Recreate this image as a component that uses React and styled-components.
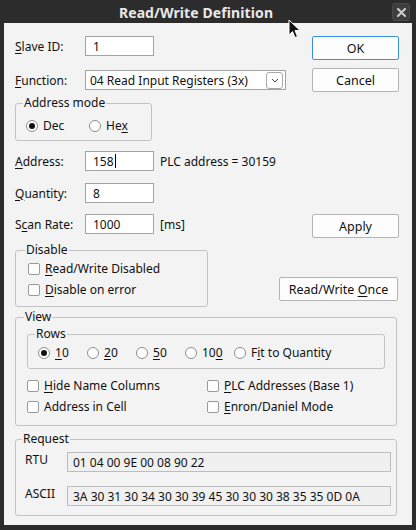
import React from 'react';
import styled, { createGlobalStyle } from 'styled-components';

const GlobalStyle = createGlobalStyle`
  html, body { margin: 0; padding: 0; background: #2c2c2c; }
  body { font-family: "Noto Sans", "DejaVu Sans", sans-serif; font-size: 12px; color: #111; }
`;

const Window = styled.div`
  position: relative;
  width: 416px;
  height: 530px;
  background: #2c2c2c;
  display: flex;
  flex-direction: column;
  box-sizing: border-box;
`;

const TitleBar = styled.div`
  height: 23px;
  display: flex;
  align-items: center;
  flex-shrink: 0;
`;

const Title = styled.div`
  flex: 1;
  text-align: center;
  color: #e8e8e8;
  font-weight: 700;
  font-size: 14px;
  letter-spacing: 0.1px;
  padding-top: 1px;
`;

const CloseButton = styled.div`
  width: 16px;
  height: 16px;
  margin-right: 6px;
  margin-top: 1px;
  border-radius: 3px;
  background: #3e3e3e;
  border: 1px solid #4a4a4a;
  display: flex;
  align-items: center;
  justify-content: center;
`;

const Body = styled.div`
  flex: 1;
  margin: 0 4px 5px 4px;
  background: #f3f3f3;
  padding: 13px 13px 0 11px;
  box-sizing: border-box;
  display: flex;
  flex-direction: column;
`;

const Row = styled.div`
  display: flex;
  align-items: ${p => p.$align || 'center'};
  justify-content: space-between;
  margin-top: ${p => p.$top || 0}px;
`;

const Field = styled.div`
  display: flex;
  align-items: center;
`;

const Label = styled.span`
  width: ${p => p.$w || 70}px;
  flex-shrink: 0;
`;

const TextBox = styled.div`
  width: ${p => p.$w || 69}px;
  height: 20px;
  box-sizing: border-box;
  border: 1px solid #a3a3a3;
  background: #fff;
  padding: 0 7px;
  display: flex;
  align-items: center;
`;

const Caret = styled.span`
  display: inline-block;
  width: 1px;
  height: 14px;
  background: #000;
  margin-left: 1px;
`;

const Note = styled.span`
  margin-left: 6px;
`;

const Combo = styled.div`
  width: 201px;
  height: 20px;
  box-sizing: border-box;
  border: 1px solid #a3a3a3;
  background: #fff;
  display: flex;
  align-items: center;
  justify-content: space-between;
  padding: 0 2px 0 4px;
`;

const DropButton = styled.div`
  width: 15px;
  height: 15px;
  border: 1px solid #a8a8a8;
  border-radius: 3px;
  display: flex;
  align-items: center;
  justify-content: center;
  background: #fff;
`;

const Button = styled.div`
  width: ${p => p.$w || 87}px;
  height: 24px;
  box-sizing: border-box;
  border: 1px solid ${p => (p.$default ? '#3b8fe0' : '#b4b4b4')};
  border-radius: 2px;
  background: #fdfdfd;
  display: flex;
  align-items: center;
  justify-content: center;
  margin-top: ${p => p.$mt || 0}px;
  margin-right: ${p => p.$mr || 0}px;
  font-size: 12.5px;
`;

const Group = styled.fieldset`
  margin: ${p => p.$top || 0}px ${p => p.$right || 0}px 0 0;
  width: ${p => (p.$w ? `${p.$w}px` : 'auto')};
  box-sizing: border-box;
  border: 1px solid #c3c3c3;
  border-radius: 3px;
  padding: ${p => p.$pad || '0 10px 6px 10px'};
  min-width: 0;
`;

const Legend = styled.legend`
  padding: 0 1px;
  margin-left: -3px;
  line-height: 14px;
`;

const RadioRow = styled.div`
  display: flex;
  align-items: center;
  margin-top: ${p => p.$top || 0}px;
`;

const Option = styled.label`
  display: flex;
  align-items: center;
  width: ${p => (p.$w ? `${p.$w}px` : 'auto')};
  flex-shrink: 0;
`;

const Radio = styled.span`
  width: 12px;
  height: 12px;
  box-sizing: border-box;
  border-radius: 50%;
  border: 1px solid #8e8e8e;
  background: #fff;
  margin-right: 5px;
  display: flex;
  align-items: center;
  justify-content: center;
  &::after {
    content: '';
    width: 6px;
    height: 6px;
    border-radius: 50%;
    background: ${p => (p.$on ? '#111' : 'transparent')};
  }
`;

const Check = styled.span`
  width: 12px;
  height: 12px;
  box-sizing: border-box;
  border-radius: 2px;
  border: 1px solid #999;
  background: #fff;
  margin-right: 5px;
`;

const CheckGrid = styled.div`
  display: grid;
  grid-template-columns: 180px 1fr;
  row-gap: 4px;
  margin-top: ${p => p.$top || 0}px;
`;

const U = styled.span`
  text-decoration: underline;
  text-underline-offset: 2px;
`;

const ReqRow = styled.div`
  display: flex;
  align-items: center;
  margin-top: ${p => p.$top || 0}px;
`;

const ReqLabel = styled.span`
  width: 42px;
  flex-shrink: 0;
  margin-top: -6px;
`;

const ReqBox = styled.div`
  flex: 1;
  height: 20px;
  box-sizing: border-box;
  border: 1px solid #bdbdbd;
  background: #f0f0f0;
  padding: 0 5px;
  display: flex;
  align-items: center;
  margin-right: -5px;
`;

const Pointer = styled.svg`
  position: absolute;
  left: 288px;
  top: 19px;
`;

const u = (before, letter, after) => (
  <span>
    {before}
    <U>{letter}</U>
    {after}
  </span>
);

export default function App() {
  return (
    <>
      <GlobalStyle />
      <Window>
        <TitleBar>
          <Title>Read/Write Definition</Title>
          <CloseButton>
            <svg width="9" height="9" viewBox="0 0 9 9">
              <path d="M1 1L8 8M8 1L1 8" stroke="#cfcfcf" strokeWidth="2" strokeLinecap="round" />
            </svg>
          </CloseButton>
        </TitleBar>
        <Body>
          <Row $align="flex-start">
            <Field>
              <Label>{u('', 'S', 'lave ID:')}</Label>
              <TextBox>1</TextBox>
            </Field>
            <Button $default>OK</Button>
          </Row>
          <Row $top={8}>
            <Field>
              <Label>{u('', 'F', 'unction:')}</Label>
              <Combo>
                <span>04 Read Input Registers (3x)</span>
                <DropButton>
                  <svg width="8" height="5" viewBox="0 0 8 5">
                    <path d="M1 1L4 4L7 1" stroke="#444" strokeWidth="1" fill="none" />
                  </svg>
                </DropButton>
              </Combo>
            </Field>
            <Button>Cancel</Button>
          </Row>

          <Group $w={137} $top={4} $pad="0 8px 6px 10px">
            <Legend>Address mode</Legend>
            <RadioRow $top={7}>
              <Option $w={63}><Radio $on />Dec</Option>
              <Option><Radio />{u('He', 'x', '')}</Option>
            </RadioRow>
          </Group>

          <Row $top={10} $align="flex-start">
            <Field>
              <Label>{u('', 'A', 'ddress:')}</Label>
              <TextBox>158<Caret /></TextBox>
              <Note>PLC address = 30159</Note>
            </Field>
          </Row>
          <Row $top={12}>
            <Field>
              <Label>{u('', 'Q', 'uantity:')}</Label>
              <TextBox>8</TextBox>
            </Field>
          </Row>
          <Row $top={11} $align="flex-start">
            <Field>
              <Label>{u('S', 'c', 'an Rate:')}</Label>
              <TextBox>1000</TextBox>
              <Note>[ms]</Note>
            </Field>
            <Button>Apply</Button>
          </Row>

          <Row $top={5} $align="flex-start">
            <Group $w={193} $pad="0 10px 8px 12px">
              <Legend>Disable</Legend>
              <RadioRow $top={3}>
                <Option><Check />{u('', 'R', 'ead/Write Disabled')}</Option>
              </RadioRow>
              <RadioRow $top={4}>
                <Option><Check />{u('', 'D', 'isable on error')}</Option>
              </RadioRow>
            </Group>
            <Button $w={119} $mt={34} $mr={1}>{u('Read/Write ', 'O', 'nce')}</Button>
          </Row>

          <Group $top={3} $right={2} $pad="0 11px 10px 11px">
            <Legend>View</Legend>
            <Group $top={3} $pad="0 10px 7px 10px">
              <Legend>Rows</Legend>
              <RadioRow $top={3}>
                <Option $w={49}><Radio $on />{u('', '1', '0')}</Option>
                <Option $w={49}><Radio />{u('', '2', '0')}</Option>
                <Option $w={49}><Radio />{u('', '5', '0')}</Option>
                <Option $w={49}><Radio />{u('10', '0', '')}</Option>
                <Option><Radio />{u('F', 'i', 't to Quantity')}</Option>
              </RadioRow>
            </Group>
            <CheckGrid $top={8}>
              <Option><Check />{u('', 'H', 'ide Name Columns')}</Option>
              <Option><Check />{u('', 'P', 'LC Addresses (Base 1)')}</Option>
              <Option><Check />Address in Cell</Option>
              <Option><Check />{u('', 'E', 'nron/Daniel Mode')}</Option>
            </CheckGrid>
          </Group>

          <Group $top={6} $right={2} $pad="0 10px 9px 9px">
            <Legend>Request</Legend>
            <ReqRow $top={6}>
              <ReqLabel>RTU</ReqLabel>
              <ReqBox>01 04 00 9E 00 08 90 22</ReqBox>
            </ReqRow>
            <ReqRow $top={14}>
              <ReqLabel>ASCII</ReqLabel>
              <ReqBox>3A 30 31 30 34 30 30 39 45 30 30 30 38 35 35 0D 0A</ReqBox>
            </ReqRow>
          </Group>
        </Body>
        <Pointer width="13" height="20" viewBox="0 0 13 20">
          <path d="M1 1L1 16L4.5 12.5L7 18.5L9.5 17.5L7 11.5L12 11.5Z" fill="#111" stroke="#fff" strokeWidth="1" strokeLinejoin="round" />
        </Pointer>
      </Window>
    </>
  );
}
